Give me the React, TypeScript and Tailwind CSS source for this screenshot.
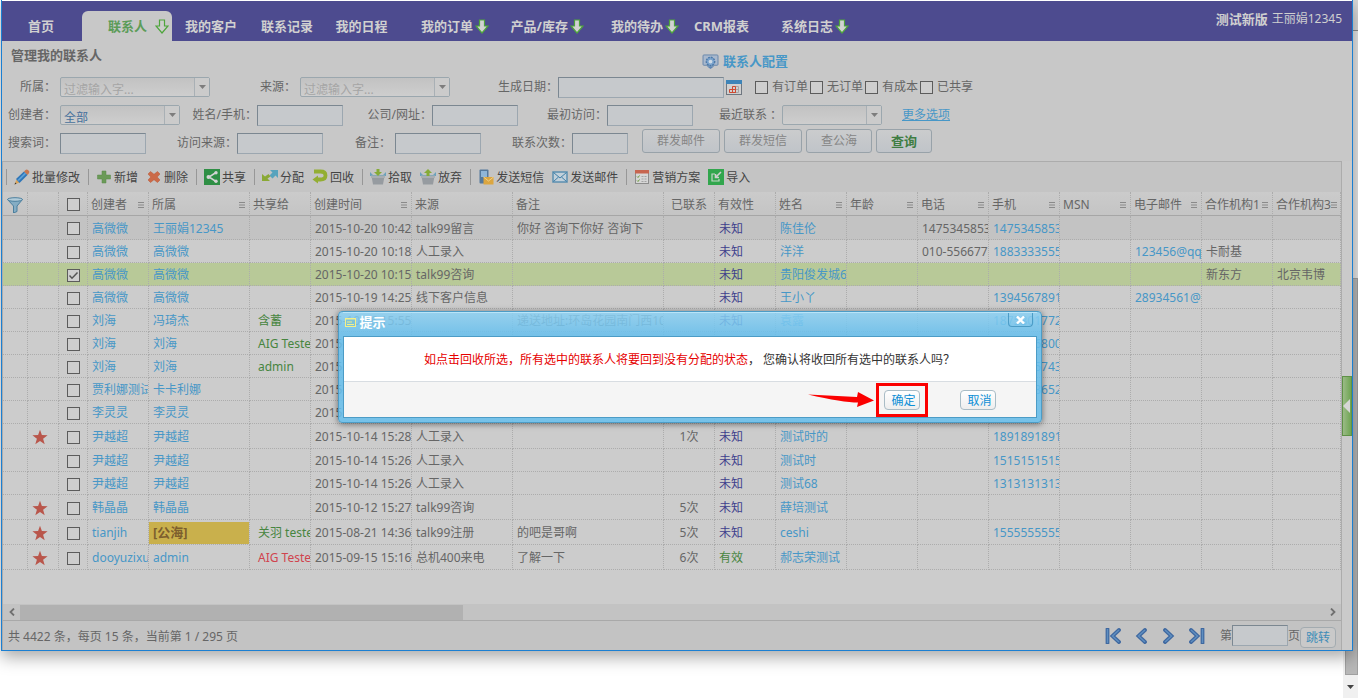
import React from 'react';

type Tone = 'text' | 'link' | 'green' | 'red' | 'sea';

interface Contact {
  height: string;
  bg?: string;
  starred?: boolean;
  checked?: boolean;
  creator: string;
  owner: string;
  ownerTone?: Tone;
  shared?: string;
  sharedTone?: Tone;
  created: string;
  source?: string;
  remark?: string;
  times?: string;
  valid: string;
  name: string;
  phone?: string;
  mobile?: string;
  email?: string;
  org1?: string;
  org3?: string;
}

const H23 = 'h-[23px]';
const H24 = 'h-6';
const H25 = 'h-[25px]';

const CONTACTS: Contact[] = [
  { height: H24, bg: 'bg-[#c3c3c3]', creator: '高微微', owner: '王丽娟12345', created: '2015-10-20 10:42:10', source: 'talk99留言', remark: '你好 咨询下你好 咨询下', valid: '未知', name: '陈佳伦', phone: '14753458533', mobile: '14753458533' },
  { height: H23, creator: '高微微', owner: '高微微', created: '2015-10-20 10:18:22', source: '人工录入', valid: '未知', name: '洋洋', phone: '010-55667788', mobile: '18833335555', email: '123456@qq.com', org1: '卡耐基' },
  { height: H23, bg: 'bg-[#b8c998]', checked: true, creator: '高微微', owner: '高微微', created: '2015-10-20 10:15:31', source: 'talk99咨询', valid: '未知', name: '贵阳俊发城6号', org1: '新东方', org3: '北京韦博' },
  { height: H23, creator: '高微微', owner: '高微微', created: '2015-10-19 14:25:09', source: '线下客户信息', valid: '未知', name: '王小丫', mobile: '13945678912', email: '28934561@qq.com' },
  { height: H23, creator: '刘海', owner: '冯琦杰', shared: '含蓄', created: '2015-10-16 15:55:40', remark: '递送地址:环岛花园南门西10号', valid: '未知', name: '袁露', mobile: '18753017727' },
  { height: H23, creator: '刘海', owner: '刘海', shared: 'AIG Tester', created: '2015-10-16 15:20:18', source: '人工录入', valid: '未知', name: '测试', mobile: '18710168001' },
  { height: H23, creator: '刘海', owner: '刘海', shared: 'admin', created: '2015-10-16 14:41:52', source: '人工录入', valid: '未知', name: '测试', mobile: '18710157433' },
  { height: H23, creator: '贾利娜测试', owner: '卡卡利娜', created: '2015-10-15 16:12:36', source: '人工录入', valid: '未知', name: '测试', mobile: '18710136522' },
  { height: H23, creator: '李灵灵', owner: '李灵灵', created: '2015-10-15 10:08:27', source: '人工录入', valid: '未知', name: '测试' },
  { height: H25, starred: true, creator: '尹越超', owner: '尹越超', created: '2015-10-14 15:28:14', source: '人工录入', times: '1次', valid: '未知', name: '测试时的', mobile: '18918918918' },
  { height: H23, creator: '尹越超', owner: '尹越超', created: '2015-10-14 15:26:50', source: '人工录入', valid: '未知', name: '测试时', mobile: '15151515151' },
  { height: H23, creator: '尹越超', owner: '尹越超', created: '2015-10-14 15:26:12', source: '人工录入', valid: '未知', name: '测试68', mobile: '13131313131' },
  { height: H25, starred: true, creator: '韩晶晶', owner: '韩晶晶', created: '2015-10-12 15:27:33', source: 'talk99咨询', times: '5次', valid: '未知', name: '薛培测试' },
  { height: H25, starred: true, creator: 'tianjih', owner: '[公海]', ownerTone: 'sea', shared: '关羽 tester', created: '2015-08-21 14:36:05', source: 'talk99注册', remark: '的吧是哥啊', times: '5次', valid: '未知', name: 'ceshi', mobile: '15555555555' },
  { height: H25, starred: true, creator: 'dooyuzixun', owner: 'admin', shared: 'AIG Tester', sharedTone: 'red', created: '2015-09-15 15:16:44', source: '总机400来电', remark: '了解一下', times: '6次', valid: '有效', name: '郝志荣测试' },
];

const TONES: Record<Tone, string> = {
  text: 'text-[#666666]',
  link: 'text-[#4797c7]',
  green: 'text-[#47853f]',
  red: 'text-[#d0434e]',
  sea: 'text-[#7d5f2e]',
};

const COLUMNS: { label: string; width: string; menu?: boolean; center?: boolean }[] = [
  { label: '创建者', width: 'w-[61px]', menu: true },
  { label: '所属', width: 'w-[101px]', menu: true },
  { label: '共享给', width: 'w-[61px]' },
  { label: '创建时间', width: 'w-[101px]', menu: true },
  { label: '来源', width: 'w-[101px]' },
  { label: '备注', width: 'w-[151px]' },
  { label: '已联系', width: 'w-[51px]', center: true },
  { label: '有效性', width: 'w-[61px]' },
  { label: '姓名', width: 'w-[71px]', menu: true },
  { label: '年龄', width: 'w-[71px]', menu: true },
  { label: '电话', width: 'w-[71px]', menu: true },
  { label: '手机', width: 'w-[71px]', menu: true },
  { label: 'MSN', width: 'w-[71px]', menu: true },
  { label: '电子邮件', width: 'w-[71px]', menu: true },
  { label: '合作机构1', width: 'w-[71px]', menu: true },
  { label: '合作机构3', width: '', menu: true },
];

const NAV: { label: string; box: string; arrow?: boolean }[] = [
  { label: '我的客户', box: 'w-[78px] justify-center' },
  { label: '联系记录', box: 'w-[74px] justify-center' },
  { label: '我的日程', box: 'w-[75px] justify-center' },
  { label: '我的订单', box: 'w-[90px] justify-end', arrow: true },
  { label: '产品/库存', box: 'w-[95px] justify-end', arrow: true },
  { label: '我的待办', box: 'w-[95px] justify-end', arrow: true },
  { label: 'CRM报表', box: 'w-[85px] justify-center' },
  { label: '系统日志', box: 'w-[85px] justify-end', arrow: true },
];

const DownArrow = ({ hollow = false }: { hollow?: boolean }) => (
  <svg width="14" height="15" viewBox="0 0 14 15" className="shrink-0">
    <path
      d="M4.500 1h5v6H13L7 14 1 7h3.500z"
      fill={hollow ? '#cdcdcd' : '#d2d2d2'}
      stroke="#4ea53c"
      strokeWidth="1.200"
    />
  </svg>
);

const icons = {
  pencil: (
    <>
      <path d="M0.500 15.500l2-5 3 3z" fill="#d9a55c" />
      <path d="M0.500 15.500l.8-2 1.200 1.200z" fill="#333" />
      <path d="M2 10L10 2.500l3.500 3.500L5.500 14z" fill="#2f76b8" />
      <path d="M3.500 11L11 3.500l1.200 1.200L4.800 12z" fill="#5fa2d8" />
      <path d="M10 2.500l1.500-1.500q1.200-1 2.800.2t.8 2.800L13.500 6z" fill="#c97850" />
    </>
  ),
  plus: <path d="M6 2h4v4h4.500v4H10v4H6v-4H1.500V6H6z" fill="#6b9a58" stroke="#5a8a48" strokeWidth="0.500" />,
  remove: <path d="M4.500 2.500l3.500 2.800 3.500-2.800L14 5l-2.800 3 2.800 3-2.500 2.500L8 10.700l-3.500 2.800L2 11l2.800-3L2 5z" fill="#cb6a48" stroke="#b95432" strokeWidth="0.500" />,
  share: (
    <>
      <rect width="16" height="16" fill="#2f8f45" />
      <path d="M12 3.500L5 8l7 4.500" fill="none" stroke="#d4d4d4" strokeWidth="1.500" />
      <circle cx="12" cy="3.800" r="1.700" fill="#d4d4d4" />
      <circle cx="4.500" cy="8" r="2" fill="#d4d4d4" />
      <circle cx="12" cy="12.200" r="1.700" fill="#d4d4d4" />
    </>
  ),
  assign: (
    <>
      <path d="M8 1h8v8l-2.500-2.500L10.500 9.500 7.500 6.500l3-3z" fill="#58a3bd" />
      <path d="M0 5v7h8l-2.500-2.500L8.500 7.500l-2-2.500L3 7.500z" fill="#8aa935" />
    </>
  ),
  recall: (
    <>
      <path d="M2 2.500h6.500q5 0 5 4t-5 4H5" fill="none" stroke="#93ae33" strokeWidth="3.800" />
      <path d="M6 6.500v8L0.500 10.500z" fill="#93ae33" />
    </>
  ),
  basket: (
    <>
      <path d="M0 3l3 3h10l3-3v4H0z" fill="#6aa1bb" />
      <path d="M1.500 7h13L13 15.500H3z" fill="#969ba0" />
      <path d="M1 6.500h14v2.500H1z" fill="#a9aeb2" />
    </>
  ),
  sms: (
    <>
      <rect x="1.500" y="0.500" width="9" height="14" rx="1" fill="#55799c" />
      <rect x="3" y="2" width="6" height="6" fill="#8fb6d8" />
      <rect x="5.500" y="8" width="10" height="7.500" fill="#dba640" />
      <path d="M5.500 8l5 4 5-4" fill="none" stroke="#f0cf86" />
    </>
  ),
  mail: (
    <>
      <rect x="1" y="3" width="14" height="10" fill="#c2d0da" stroke="#5b8fb0" strokeWidth="1.500" />
      <path d="M1.500 3.500l6.500 5.500 6.500-5.500M1.500 12.500l5-4.500M14.500 12.500l-5-4.500" fill="none" stroke="#3f7fa8" />
    </>
  ),
  plan: (
    <>
      <rect x="1.500" y="1.500" width="13" height="13" fill="#d6d6d6" stroke="#8c8c8c" />
      <rect x="1" y="1" width="14" height="3.500" fill="#c7654f" />
      <path d="M3 7.500l1 1 1.500-2M3 11.500l1 1 1.500-2" fill="none" stroke="#6d9d3d" />
      <path d="M7.500 7.500H13M7.500 10H13M7.500 12.500H13" stroke="#a3a3a3" strokeDasharray="2 1" />
    </>
  ),
  import: (
    <>
      <rect width="16" height="16" fill="#32a64d" />
      <path d="M7 5H4v7h7V10" fill="none" stroke="#c4d8c8" strokeWidth="1.200" />
      <path d="M13 3L8 8M7.500 5v3.500H11" fill="none" stroke="#d0d0d0" strokeWidth="1.600" />
    </>
  ),
};

const pickIcon = (
  <>
    {icons.basket}
    <path d="M6.500 0h3v3H12L8 7 4 3h2.500z" fill="#86ab37" />
  </>
);
const dropIcon = (
  <>
    {icons.basket}
    <path d="M6.500 7h3V4H12L8 0 4 4h2.500z" fill="#86ab37" />
  </>
);

const TOOLS: { label: string; icon: React.ReactNode; sep?: boolean }[] = [
  { label: '批量修改', icon: icons.pencil, sep: true },
  { label: '新增', icon: icons.plus, sep: true },
  { label: '删除', icon: icons.remove },
  { label: '共享', icon: icons.share, sep: true },
  { label: '分配', icon: icons.assign, sep: true },
  { label: '回收', icon: icons.recall },
  { label: '拾取', icon: pickIcon, sep: true },
  { label: '放弃', icon: dropIcon },
  { label: '发送短信', icon: icons.sms, sep: true },
  { label: '发送邮件', icon: icons.mail },
  { label: '营销方案', icon: icons.plan, sep: true },
  { label: '导入', icon: icons.import },
];

const Check = ({ label, checked = false }: { label?: string; checked?: boolean }) => (
  <span className="relative block size-[13px] shrink-0">
    <input
      type="checkbox"
      aria-label={label}
      defaultChecked={checked}
      className="peer block size-[13px] appearance-none border border-[#5c5c5c] bg-[#cecece]"
    />
    <svg viewBox="0 0 13 13" className="pointer-events-none absolute inset-0 hidden peer-checked:block">
      <path d="M2.500 6.500L5 9.200 10.500 3.500" fill="none" stroke="#555" strokeWidth="1.500" />
    </svg>
  </span>
);

const Label = ({ htmlFor, className, children }: { htmlFor: string; className: string; children: React.ReactNode }) => (
  <label htmlFor={htmlFor} className={`shrink-0 whitespace-nowrap text-right ${className}`}>
    {children}
  </label>
);

const TextBox = ({ id, className }: { id: string; className: string }) => (
  <input
    id={id}
    type="text"
    className={`h-[21px] shrink-0 border border-t-[#7b8791] border-l-[#7b8791] border-r-[#9ca7b0] border-b-[#9ca7b0] bg-[#c6c9cc] px-1 outline-none ${className}`}
  />
);

const Combo = ({ id, value, className, tone }: { id: string; value: string; className: string; tone: string }) => (
  <div className={`relative shrink-0 ${className}`}>
    <select
      id={id}
      className={`block h-5 w-full appearance-none rounded-xs border border-[#9ba7ae] bg-linear-to-b from-[#c2c2c2] to-[#cecece] pt-1 pl-[3px] leading-4 outline-none ${tone}`}
    >
      <option>{value}</option>
    </select>
    <span className="pointer-events-none absolute inset-y-px right-px flex w-[15px] items-center justify-center border-l border-[#a9b0b5] bg-[#cbcbcb]">
      <svg width="7" height="4" viewBox="0 0 7 4">
        <path d="M0 0h7L3.500 4z" fill="#7d7d7d" />
      </svg>
    </span>
  </div>
);

const FormButton = ({ className, children }: { className: string; children: React.ReactNode }) => (
  <button
    type="button"
    className={`h-6 rounded-[3px] border border-[#98a2a9] bg-linear-to-b from-[#cbcccd] to-[#c0c4c9] ${className}`}
  >
    {children}
  </button>
);

const Cell = ({ children, tone = 'text', className = 'pl-1' }: { children?: React.ReactNode; tone?: Tone; className?: string }) => (
  <td className={`overflow-hidden border-r border-b border-dotted border-[#acacac] pt-0.5 whitespace-nowrap ${TONES[tone]} ${className}`}>
    {children}
  </td>
);

const TopBar = () => (
  <header className="flex h-10 items-end justify-between bg-[#4d4b8f] text-[13px] text-[#d0d0d0]">
    <nav className="flex h-[30px] font-bold">
      <a href="#home" className="flex w-20 items-center pl-[26px]">首页</a>
      <a href="#contacts" className="flex w-[90px] items-center justify-end gap-2 rounded-t-md bg-[#c8c8c8] pr-[3px] text-[#5c9c58]">
        联系人
        <DownArrow hollow />
      </a>
      {NAV.map(item => (
        <a key={item.label} href="#nav" className={`flex items-center gap-0.5 whitespace-nowrap ${item.box}`}>
          {item.label}
          {item.arrow && <DownArrow />}
        </a>
      ))}
    </nav>
    <div className="flex items-center gap-1 self-start pt-2 pr-2.5 leading-5 whitespace-nowrap">
      <strong>测试新版</strong>
      <span className="text-xs leading-5">王丽娟12345</span>
    </div>
  </header>
);

const SearchForm = () => (
  <form className="pb-1" onSubmit={e => e.preventDefault()}>
    <div className="flex h-8 pt-1 text-[13px] leading-5 font-bold">
      <h1 className="w-[700px] pl-[9px]">管理我的联系人</h1>
      <a href="#config" className="flex items-center gap-1 pt-1 text-[#4797c7]">
        <svg width="17" height="15" viewBox="0 0 18 16">
          <rect x="1" y="1" width="16" height="11" rx="1" fill="#a9b8cc" stroke="#6585ab" />
          <circle cx="9" cy="8" r="4.500" fill="#7ba3cc" stroke="#4b79a8" strokeWidth="1.500" strokeDasharray="2 1" />
          <circle cx="9" cy="8" r="2" fill="#cfdbe6" />
          <path d="M5 13h8l-4 3z" fill="#5e86b3" />
        </svg>
        联系人配置
      </a>
    </div>
    <div className="flex h-7 items-center">
      <Label htmlFor="owner" className="w-[58px] pr-1">所属：</Label>
      <Combo id="owner" value="过滤输入字..." className="w-[150px]" tone="text-[#a5a5a5]" />
      <Label htmlFor="source" className="w-[90px] pr-1">来源：</Label>
      <Combo id="source" value="过滤输入字..." className="w-[150px]" tone="text-[#a5a5a5]" />
      <Label htmlFor="date" className="w-[108px]">生成日期：</Label>
      <TextBox id="date" className="w-[166px]" />
      <button type="button" aria-label="生成日期" className="ml-0.5 size-4">
        <svg width="16" height="16" viewBox="0 0 16 16">
          <rect x="0.500" y="1.500" width="15" height="14" fill="#d0d0d0" stroke="#6f7780" />
          <rect x="0" y="1" width="16" height="4" fill="#3d84b8" />
          <path d="M6.500 7.500h6v6h-6zM9.500 7.500v6M6.500 10.500h6M3.500 10.500h3v3h-3z" fill="none" stroke="#a6a6a6" />
          <path d="M3.500 10.500h6v3h-6zM6.500 7.500h3v6h-3z" fill="none" stroke="#cf4a31" />
        </svg>
      </button>
      <div className="flex gap-0.5 pl-[13px]">
        {['有订单', '无订单', '有成本', '已共享'].map(text => (
          <label key={text} className="flex items-center gap-1 whitespace-nowrap">
            <Check />
            {text}
          </label>
        ))}
      </div>
    </div>
    <div className="flex h-7 items-center">
      <Label htmlFor="creator" className="w-[58px] pr-1">创建者：</Label>
      <Combo id="creator" value="全部" className="w-[120px]" tone="text-[#47719c]" />
      <Label htmlFor="name" className="w-[77px]">姓名/手机：</Label>
      <TextBox id="name" className="w-[86px]" />
      <Label htmlFor="company" className="w-[89px]">公司/网址：</Label>
      <TextBox id="company" className="w-[86px]" />
      <Label htmlFor="first" className="w-[89px]">最初访问：</Label>
      <TextBox id="first" className="w-[86px]" />
      <Label htmlFor="last" className="w-[89px]">最近联系 ：</Label>
      <Combo id="last" value="" className="w-[100px]" tone="" />
      <a href="#more" className="ml-5 whitespace-nowrap text-[#4797c7] underline">更多选项</a>
    </div>
    <div className="flex h-7 items-center">
      <Label htmlFor="keyword" className="w-[58px] pr-1">搜索词：</Label>
      <TextBox id="keyword" className="w-[86px]" />
      <Label htmlFor="visit" className="w-[91px]">访问来源：</Label>
      <TextBox id="visit" className="w-[86px]" />
      <Label htmlFor="remark" className="w-[72px] pr-1">备注：</Label>
      <TextBox id="remark" className="w-[86px]" />
      <Label htmlFor="count" className="w-[91px]">联系次数：</Label>
      <TextBox id="count" className="w-14" />
      <div className="ml-3.5 flex gap-1 pb-1 text-[#858585]">
        <FormButton className="w-[78px]">群发邮件</FormButton>
        <FormButton className="w-[78px]">群发短信</FormButton>
        <FormButton className="w-[66px]">查公海</FormButton>
        <FormButton className="w-14 text-[13px] font-bold text-[#3f7d43]">查询</FormButton>
      </div>
    </div>
  </form>
);

const Toolbar = () => (
  <div className="flex h-[30px] items-center gap-2 bg-[#c4c4c4] pl-[3px] text-[#444444]">
    {TOOLS.map(tool => (
      <React.Fragment key={tool.label}>
        {tool.sep && <span className="-mr-px h-4 w-px bg-[#979797]" />}
        <button type="button" className="flex items-center gap-0.5 whitespace-nowrap">
          <svg width="16" height="16" viewBox="0 0 16 16">{tool.icon}</svg>
          <span className="pt-0.5">{tool.label}</span>
        </button>
      </React.Fragment>
    ))}
  </div>
);

const headCell = 'h-6 border-r border-b border-r-[#acacac] border-b-[#a6a6a6] [border-right-style:dotted] pt-0.5 font-normal';

const ContactTable = () => (
  <table className="w-full table-fixed border-separate border-spacing-0 bg-[#cccccc]">
    <thead className="bg-linear-to-b from-[#cbcbcb] to-[#c4c4c4]">
      <tr>
        <th className={`w-[25px] ${headCell}`}>
          <svg width="16" height="16" viewBox="0 0 16 16" className="mx-auto">
            <path d="M0.500 2.500h15L10 9v5.500L6.500 16V9z" fill="#85adc4" stroke="#4b7f9e" />
            <ellipse cx="8" cy="2.500" rx="7.500" ry="1.800" fill="#b3ccd9" stroke="#4b7f9e" />
          </svg>
        </th>
        <th className={`w-[31px] ${headCell}`} />
        <th className={`w-[29px] ${headCell}`}>
          <div className="flex justify-center"><Check label="全选" /></div>
        </th>
        {COLUMNS.map(col => (
          <th key={col.label} className={`${col.width} ${headCell}`}>
            <div className={`flex items-center whitespace-nowrap ${col.center ? 'justify-center' : 'justify-between pr-1 pl-[3px]'}`}>
              {col.label}
              {col.menu && (
                <svg width="6" height="6" viewBox="0 0 6 6" className="shrink-0">
                  <path d="M0 .5h6M0 3h6M0 5.500h6" stroke="#8a8a8a" />
                </svg>
              )}
            </div>
          </th>
        ))}
      </tr>
    </thead>
    <tbody>
      {CONTACTS.map((c, i) => (
        <tr key={i} className={`${c.height} ${c.bg ?? ''}`}>
          <Cell />
          <Cell>
            {c.starred && (
              <svg width="16" height="16" viewBox="0 0 16 16">
                <path d="M8 .8l1.900 5.300 5.700.1-4.500 3.500 1.600 5.500L8 12l-4.700 3.200 1.600-5.500L.4 6.200l5.700-.1z" fill="#b9564b" />
              </svg>
            )}
          </Cell>
          <Cell className="">
            <div className="flex justify-center"><Check label={c.creator} checked={c.checked} /></div>
          </Cell>
          <Cell tone="link">{c.creator}</Cell>
          {c.ownerTone === 'sea' ? (
            <Cell tone="sea" className="font-bold">
              <div className="h-[22px] bg-[#c9b04c] pl-1 text-[13px] leading-5">{c.owner}</div>
            </Cell>
          ) : (
            <Cell tone="link">{c.owner}</Cell>
          )}
          <Cell tone={c.sharedTone ?? 'green'} className="pl-2">{c.shared}</Cell>
          <Cell>{c.created}</Cell>
          <Cell>{c.source}</Cell>
          <Cell>{c.remark}</Cell>
          <Cell className="text-center">{c.times}</Cell>
          <Cell>
            <span className={c.valid === '有效' ? 'text-[#47853f]' : 'text-[#3f3f8c]'}>{c.valid}</span>
          </Cell>
          <Cell tone="link">{c.name}</Cell>
          <Cell />
          <Cell>{c.phone}</Cell>
          <Cell tone="link">{c.mobile}</Cell>
          <Cell />
          <Cell tone="link">{c.email}</Cell>
          <Cell>{c.org1}</Cell>
          <Cell>{c.org3}</Cell>
        </tr>
      ))}
    </tbody>
  </table>
);

const ScrollRow = () => (
  <div className="flex h-4 items-center bg-[#c3c3c3]">
    <button type="button" aria-label="向左" className="flex w-[17px] justify-center">
      <svg width="6" height="8" viewBox="0 0 6 8"><path d="M5 .5L1.500 4 5 7.500" fill="none" stroke="#707070" strokeWidth="1.800" /></svg>
    </button>
    <div className="flex-1"><div className="h-[15px] w-[34%] bg-[#b1b1b1]" /></div>
    <button type="button" aria-label="向右" className="flex w-[17px] justify-center">
      <svg width="6" height="8" viewBox="0 0 6 8"><path d="M1 .5L4.500 4 1 7.500" fill="none" stroke="#707070" strokeWidth="1.800" /></svg>
    </button>
  </div>
);

const PAGER = [
  { label: '首页', d: 'M2.500 1v14M14 2L7.500 8l6.500 6' },
  { label: '上一页', d: 'M12 2L5.500 8l6.500 6' },
  { label: '下一页', d: 'M4 2l6.500 6L4 14' },
  { label: '末页', d: 'M13.500 1v14M2 2l6.500 6L2 14' },
];

const Pager = () => (
  <div className="flex h-[30px] items-center justify-between border-t border-[#a9a9a9] bg-[#c3c3c3] px-[5px]">
    <span className="pt-0.5">共 4422 条，每页 15 条，当前第 1 / 295 页</span>
    <div className="flex items-center">
      <div className="flex gap-3 pr-[15px]">
        {PAGER.map(p => (
          <button key={p.label} type="button" aria-label={p.label}>
            <svg width="16" height="16" viewBox="0 0 16 16">
              <path d={p.d} fill="none" stroke="#3f68a0" strokeWidth="3.800" strokeLinecap="round" />
              <path d={p.d} fill="none" stroke="#5f8fc0" strokeWidth="1.400" />
            </svg>
          </button>
        ))}
      </div>
      <label htmlFor="page">第</label>
      <TextBox id="page" className="w-14" />
      <span>页</span>
      <button type="button" className="mt-1 h-[21px] w-9 rounded-[4px] border border-[#a3abb0] bg-[#c9c9c9] leading-5 text-[#3f8db8]">
        跳转
      </button>
    </div>
  </div>
);

const dialogButton = 'h-5 w-9 rounded-[4px] border border-[#a9bcc6] bg-linear-to-b from-[#ffffff] to-[#eeeeee] pl-1 leading-5 text-[#0d8fd6]';

const ConfirmDialog = () => (
  <div
    role="dialog"
    aria-labelledby="dialog-title"
    className="absolute top-[311px] left-9/36 ml-[-2px] w-[704px] rounded-[4px] border border-[#4c9cc6] bg-linear-to-b from-[#8dd1f3]/85 to-[#67c0ee]/85 to-20% px-1 pb-1 shadow-[0_1px_6px_rgba(0,0,0,0.5)]"
  >
    <div className="flex h-6 items-start justify-between border-t border-[#b9e4f8] pr-1">
      <div className="flex items-center gap-1 pl-0.5 text-white">
        <svg width="11" height="9" viewBox="0 0 11 9">
          <rect x="0.500" y="0.500" width="10" height="8" fill="#7fc3d8" stroke="#f4f08a" />
          <path d="M0 1h11M2 4h5M2 6.500h7" stroke="#f4f08a" />
        </svg>
        <h2 id="dialog-title" className="text-[13px] leading-[18px] font-bold">提示</h2>
      </div>
      <button type="button" aria-label="关闭" className="flex h-[14px] w-[25px] items-center justify-center rounded-b-[4px] border border-t-0 border-[#4c9cc6]">
        <svg width="9" height="8" viewBox="0 0 9 8"><path d="M1 .5L8 7.500M8 .5L1 7.500" stroke="#fff" strokeWidth="2.400" /></svg>
      </button>
    </div>
    <div className="border border-[#4c9cc6]">
      <p className="bg-white pt-[13px] pb-[11px] text-center leading-5 text-[#333333]">
        <span className="text-[#e60000]">如点击回收所选，所有选中的联系人将要回到没有分配的状态</span>
        ， 您确认将收回所有选中的联系人吗？
      </p>
      <div className="flex h-9 items-center justify-end border-t border-[#d8dde2] bg-[#f5f5f5] pr-10">
        <svg width="68" height="18" viewBox="0 0 68 18">
          <path d="M0 3.500l49 2.500 1-5 16 8.500-17 6.500 1-4.500q-15 0-50-8z" fill="#fb0000" />
        </svg>
        <div className="mr-8 border-[3px] border-[#fb0000] px-[5px] py-1">
          <button type="button" className={`block ${dialogButton}`}>确定</button>
        </div>
        <button type="button" className={dialogButton}>取消</button>
      </div>
    </div>
  </div>
);

export default function App() {
  return (
    <div className="relative min-h-screen overflow-hidden bg-white pr-[5px] pl-px font-['Noto_Sans','Noto_Sans_CJK_SC',sans-serif] text-xs leading-4 text-[#666666]">
      {/* page scrollbar behind the window */}
      <div className="absolute inset-y-0 right-0 flex w-[15px] flex-col bg-[#f0f0f0]">
        <div className="h-[31px] border-b border-[#8c8c8c] bg-[#d8d8d8]" />
        <div className="h-[247px] bg-[#e6e6e6]" />
        <div className="ml-0.5 flex-1 border border-[#a0a0a0] bg-[#b8b8b8]" />
        <div className="flex h-[23px] items-center justify-center">
          <svg width="7" height="4" viewBox="0 0 7 4"><path d="M0 0h7L3.500 4z" fill="#444" /></svg>
        </div>
      </div>

      <div className="relative border-x border-b border-[#1b7fd2] bg-[#c8c8c8] pt-px shadow-[0_6px_16px_rgba(0,0,0,0.35)]">
        <div className="absolute inset-x-0 top-0 h-px bg-white" />
        <TopBar />
        <SearchForm />
        <div className="flex">
          <main className="min-w-0 flex-1 border-t border-r border-l border-[#acacac] bg-[#cccccc]">
            <Toolbar />
            <div className="overflow-hidden pb-[34px]">
              <ContactTable />
            </div>
            <ScrollRow />
            <Pager />
          </main>
          <aside className="w-2.5 shrink-0 bg-[#cacaca] pt-[215px]">
            <button type="button" aria-label="展开" className="flex h-[60px] w-full items-center border border-[#5f9147] bg-linear-to-r from-[#9aba86] to-[#6fa552]">
              <svg width="7" height="14" viewBox="0 0 7 14"><path d="M7 0v14L0 7z" fill="#d6d6d6" /></svg>
            </button>
          </aside>
        </div>
        <ConfirmDialog />
      </div>
    </div>
  );
}
